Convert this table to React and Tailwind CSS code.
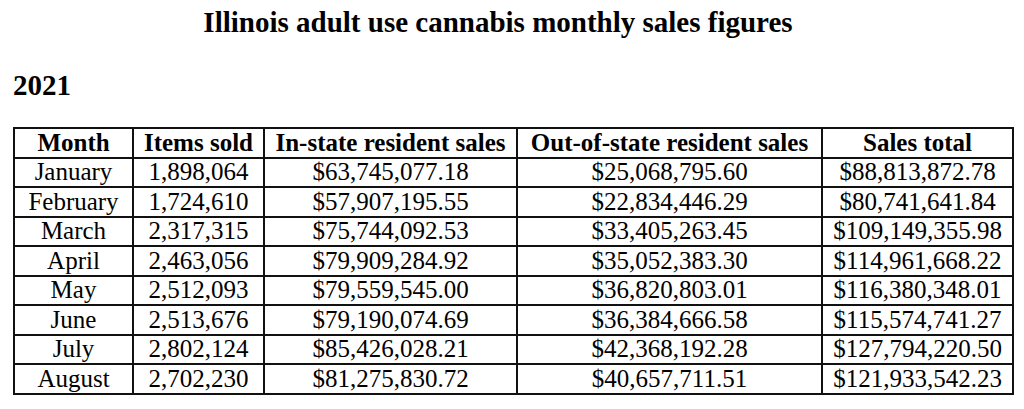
import React from 'react';

const rows = [
  ['January', '1,898,064', '$63,745,077.18', '$25,068,795.60', '$88,813,872.78'],
  ['February', '1,724,610', '$57,907,195.55', '$22,834,446.29', '$80,741,641.84'],
  ['March', '2,317,315', '$75,744,092.53', '$33,405,263.45', '$109,149,355.98'],
  ['April', '2,463,056', '$79,909,284.92', '$35,052,383.30', '$114,961,668.22'],
  ['May', '2,512,093', '$79,559,545.00', '$36,820,803.01', '$116,380,348.01'],
  ['June', '2,513,676', '$79,190,074.69', '$36,384,666.58', '$115,574,741.27'],
  ['July', '2,802,124', '$85,426,028.21', '$42,368,192.28', '$127,794,220.50'],
  ['August', '2,702,230', '$81,275,830.72', '$40,657,711.51', '$121,933,542.23'],
];

const headers = ['Month', 'Items sold', 'In-state resident sales', 'Out-of-state resident sales', 'Sales total'];
const widths = ['w-[119px]', 'w-[131px]', 'w-[253px]', 'w-[305px]', 'w-[191px]'];

const App = () => {
  return (
    <div className="w-[1024px] h-[409px] bg-white text-black font-['Liberation_Serif',serif] overflow-hidden">
      <h1 className="pt-[6px] pr-[28px] text-center text-[29px] font-bold leading-[32px]">
        Illinois adult use cannabis monthly sales figures
      </h1>
      <h2 className="mt-[31px] pl-[13px] text-[29px] font-bold leading-[32px]">2021</h2>
      <table className="mt-[26px] ml-[13px] border-collapse border-2 border-[#111] text-[25px] leading-[26px]">
        <thead>
          <tr className="h-[29.5px]">
            {headers.map((h, i) => (
              <th key={h} className={`${widths[i]} border-2 border-[#111] p-0 font-bold text-center`}>
                {h}
              </th>
            ))}
          </tr>
        </thead>
        <tbody>
          {rows.map((r) => (
            <tr key={r[0]} className="h-[29.5px]">
              {r.map((c, i) => (
                <td key={i} className={`${widths[i]} border-2 border-[#111] p-0 text-center`}>
                  {c}
                </td>
              ))}
            </tr>
          ))}
        </tbody>
      </table>
    </div>
  );
};

export default App;
